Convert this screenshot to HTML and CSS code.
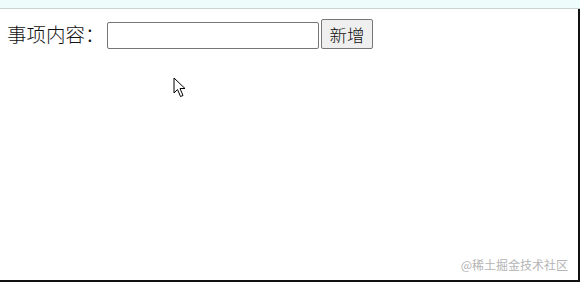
FILE: index.html
```html
<!DOCTYPE html>
<html lang="zh-CN">
<head>
  <meta charset="UTF-8">
  <title>事项</title>
  <link rel="stylesheet" href="styles.css">
</head>
<body>
  <div class="topbar"></div>
  <div class="frame">
    <div class="form-row">
      <label class="label" for="item">事项内容：</label>
      <input type="text" id="item" class="item-input">
      <button class="add-btn">新增</button>
    </div>

    <!-- mouse pointer -->
    <svg class="cursor" width="14" height="22" viewBox="0 0 14 22">
      <path d="M1 1 L1 16 L4.5 12.5 L7.5 19.5 L10 18.5 L7 11.5 L12 11.5 Z" fill="#fff" stroke="#000" stroke-width="1"/>
    </svg>

    <div class="watermark">@稀土掘金技术社区</div>
  </div>
</body>
</html>
```

FILE: styles.css
```css
body {
  margin: 0;
  width: 580px;
  height: 282px;
  overflow: hidden;
  background: #fff;
  font-family: "Noto Sans CJK SC", "Liberation Sans", sans-serif;
}
.topbar {
  height: 8px;
  background: #effcfc;
  border-bottom: 1px solid #c8d4d4;
}
.frame {
  position: relative;
  height: 271px;
  border-right: 2px solid #111;
  border-bottom: 2px solid #111;
}
.form-row {
  display: flex;
  align-items: flex-end;
  padding: 10px 0 0 7px;
}
.label {
  flex-shrink: 0;
  width: 100px;
  white-space: nowrap;
  font-size: 19.5px;
  line-height: 30px;
  font-weight: 300;
  color: #111;
}
.item-input {
  box-sizing: border-box;
  flex-shrink: 0;
  width: 212px;
  height: 27px;
  padding: 1px 6px;
  border: 1px solid #767676;
  border-radius: 2px;
  font-size: 16px;
}
.add-btn {
  box-sizing: border-box;
  flex-shrink: 0;
  width: 52px;
  height: 30px;
  margin-left: 2px;
  padding: 0;
  font-family: "Noto Sans CJK SC", sans-serif;
  font-size: 17.5px;
  font-weight: 300;
  color: #111;
  background: #efefef;
  border: 1px solid #767676;
  border-radius: 2px;
}
.cursor {
  position: absolute;
  left: 173px;
  top: 68px;
}
.watermark {
  position: absolute;
  right: 10px;
  bottom: 7px;
  font-size: 12px;
  color: #b4b4b4;
}
```
